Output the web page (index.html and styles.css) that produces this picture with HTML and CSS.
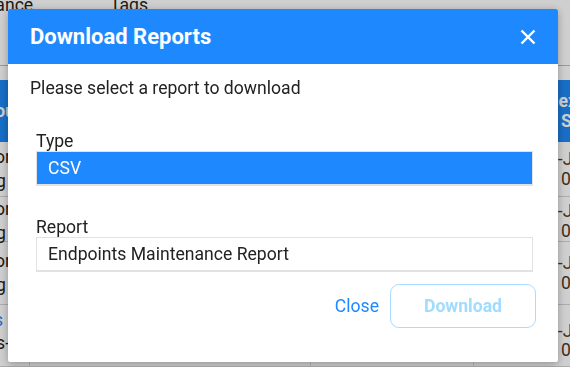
FILE: index.html
```html
<!DOCTYPE html>
<html lang="en">
<head>
    <meta charset="UTF-8">
    <meta name="viewport" content="width=device-width, initial-scale=1.0">
    <title>Download Reports</title>
    <link rel="stylesheet" href="styles.css">
</head>
<body>

    <div class="table">
        <div class="row top-row">
            <div class="cell c1">Compliance</div>
            <div class="cell c2">Tags</div>
            <div class="cell c3"></div>
            <div class="cell c4"></div>
        </div>
        <div class="row tool-row"></div>
        <div class="row head-row">
            <div class="cell c1">Group</div>
            <div class="cell c2"></div>
            <div class="cell c3"></div>
            <div class="cell c4"><span class="h1">Next</span><span class="h2">Scan</span></div>
        </div>
        <div class="row data-row r1">
            <div class="cell c1"><span class="l1">Vendor</span><span class="l2">Ring</span></div>
            <div class="cell c2"></div>
            <div class="cell c3"></div>
            <div class="cell c4"><span class="d1">03-Jun</span><span class="d2">00:00</span></div>
        </div>
        <div class="row data-row r2">
            <div class="cell c1"><span class="l1">Vendor</span><span class="l2">Ring</span></div>
            <div class="cell c2"></div>
            <div class="cell c3"></div>
            <div class="cell c4"><span class="d1">03-Jun</span><span class="d2">00:00</span></div>
        </div>
        <div class="row data-row r3">
            <div class="cell c1"><span class="l1">Vendor</span><span class="l2">Ring</span></div>
            <div class="cell c2"></div>
            <div class="cell c3"></div>
            <div class="cell c4"><span class="d1">03-Jun</span><span class="d2">00:00</span></div>
        </div>
        <div class="row data-row r4">
            <div class="cell c1"><span class="l1 link">Servers</span><span class="l2 dash">Linux servers-</span></div>
            <div class="cell c2"></div>
            <div class="cell c3"></div>
            <div class="cell c4"><span class="d1">03-Jun</span><span class="d2">00:00</span></div>
        </div>
    </div>

    <div class="overlay"></div>

    <div class="modal">
        <div class="modal-header">
            <h2>Download Reports</h2>
            <button class="close-x" aria-label="Close">
                <svg width="16" height="16" viewBox="0 0 16 16">
                    <path d="M1.5 1.5 L14.5 14.5 M14.5 1.5 L1.5 14.5" stroke="#fff" stroke-width="2.4"/>
                </svg>
            </button>
        </div>
        <div class="modal-body">
            <p class="prompt">Please select a report to download</p>

            <div class="field">
                <label>Type</label>
                <div class="select-box">CSV</div>
            </div>

            <div class="field">
                <label>Report</label>
                <div class="input-box">Endpoints Maintenance Report</div>
            </div>

            <div class="actions">
                <button class="btn-text">Close</button>
                <button class="btn-outline" disabled>Download</button>
            </div>
        </div>
    </div>

</body>
</html>
```

FILE: styles.css
```css
* {
    margin: 0;
    padding: 0;
    box-sizing: border-box;
    font-family: 'Roboto', 'Liberation Sans', sans-serif;
}

body {
    width: 570px;
    height: 367px;
    overflow: hidden;
    background: #fff;
    color: #222;
}

/* background table (dimmed behind the dialog) */
.table {
    margin-top: -6px;
    margin-left: -60px;
    width: 716px;
}

.row {
    display: grid;
    grid-template-columns: 90px 281px 163px 182px;
}

.cell {
    font-size: 17.6px;
    line-height: 22px;
    white-space: nowrap;
}

.top-row {
    height: 31px;
}

.top-row .c1 {
    text-align: right;
    margin-right: -2px;
}

.top-row .c2 {
    padding-left: 80px;
}

.tool-row {
    height: 41px;
    border-bottom: 1px solid #bdbdbd;
}

.head-row {
    margin-top: 14px;
    height: 62px;
    background: #1e88f5;
    color: #fff;
    font-weight: bold;
    align-items: center;
}

.head-row .c1 {
    text-align: right;
    padding-right: 5px;
}

.head-row .c4 {
    display: flex;
    flex-direction: column;
    line-height: 20px;
}

.h1 {
    padding-left: 72px;
}

.h2 {
    padding-left: 87px;
}

.data-row {
    border-bottom: 1px solid #d4d4d4;
}

.data-row .cell {
    border-right: 1px solid #e0e0e0;
    display: flex;
    flex-direction: column;
    justify-content: center;
}

.data-row .c1 {
    align-items: flex-end;
    padding-right: 18px;
    line-height: 24px;
}

.data-row .c1 .l2 {
    padding-right: 5px;
}

.data-row .c4 {
    line-height: 20px;
}

.d1 {
    padding-left: 64px;
    color: #5e3d1c;
}

.d2 {
    padding-left: 87px;
    color: #4a3a2a;
}

.r1 { height: 55px; }
.r2 { height: 45px; }
.r3 { height: 63px; }
.r4 { height: 62px; }

.r4 .c1 {
    justify-content: flex-start;
    padding-top: 4px;
    line-height: 23px;
}

.r4 .c1 .link {
    padding-right: 8px;
}

.r4 .c1 .dash {
    padding-right: 1px;
}

.r4 .c4 {
    justify-content: flex-start;
    padding-top: 17px;
    line-height: 19px;
}

.link {
    color: #1e88f5;
}

.overlay {
    position: fixed;
    inset: 0;
    background: rgba(0, 0, 0, 0.19);
}

/* dialog */
.modal {
    position: fixed;
    left: 8px;
    top: 9px;
    width: 550px;
    height: 353px;
    background: #fff;
    border-radius: 2px;
    box-shadow: 0 2px 8px rgba(0, 0, 0, 0.3);
    overflow: hidden;
}

.modal-header {
    height: 55px;
    background: #1e88ff;
    display: flex;
    align-items: center;
    justify-content: space-between;
    padding: 0 22px 0 22px;
}

.modal-header h2 {
    color: #fff;
    font-size: 22px;
    font-weight: bold;
}

.close-x {
    background: none;
    border: none;
    display: flex;
    cursor: pointer;
}

.modal-body {
    padding: 12px 25px 0 22px;
}

.prompt {
    font-size: 17.6px;
    line-height: 24px;
    color: #222;
    margin-bottom: 31px;
}

.field {
    margin-left: 6px;
}

.field + .field {
    margin-top: 31px;
}

.field label {
    display: block;
    font-size: 17.6px;
    line-height: 20px;
    color: #222;
}

.select-box,
.input-box {
    height: 35px;
    border: 1px solid #e2e2e2;
    border-bottom-width: 2px;
    font-size: 17.6px;
    line-height: 32px;
    padding-left: 11px;
}

.select-box {
    background: #1e88ff;
    color: #fff;
}

.input-box {
    color: #222;
}

.actions {
    display: flex;
    justify-content: flex-end;
    align-items: center;
    gap: 11px;
    margin-top: 12px;
    margin-right: -3px;
}

.btn-text {
    background: none;
    border: none;
    color: #1e88ff;
    font-size: 17.6px;
    padding: 0;
    cursor: pointer;
}

.btn-outline {
    width: 146px;
    height: 44px;
    border: 1px solid #a6dcff;
    border-radius: 9px;
    background: #fff;
    color: #a0dcff;
    font-size: 17.6px;
    font-weight: bold;
}
```
